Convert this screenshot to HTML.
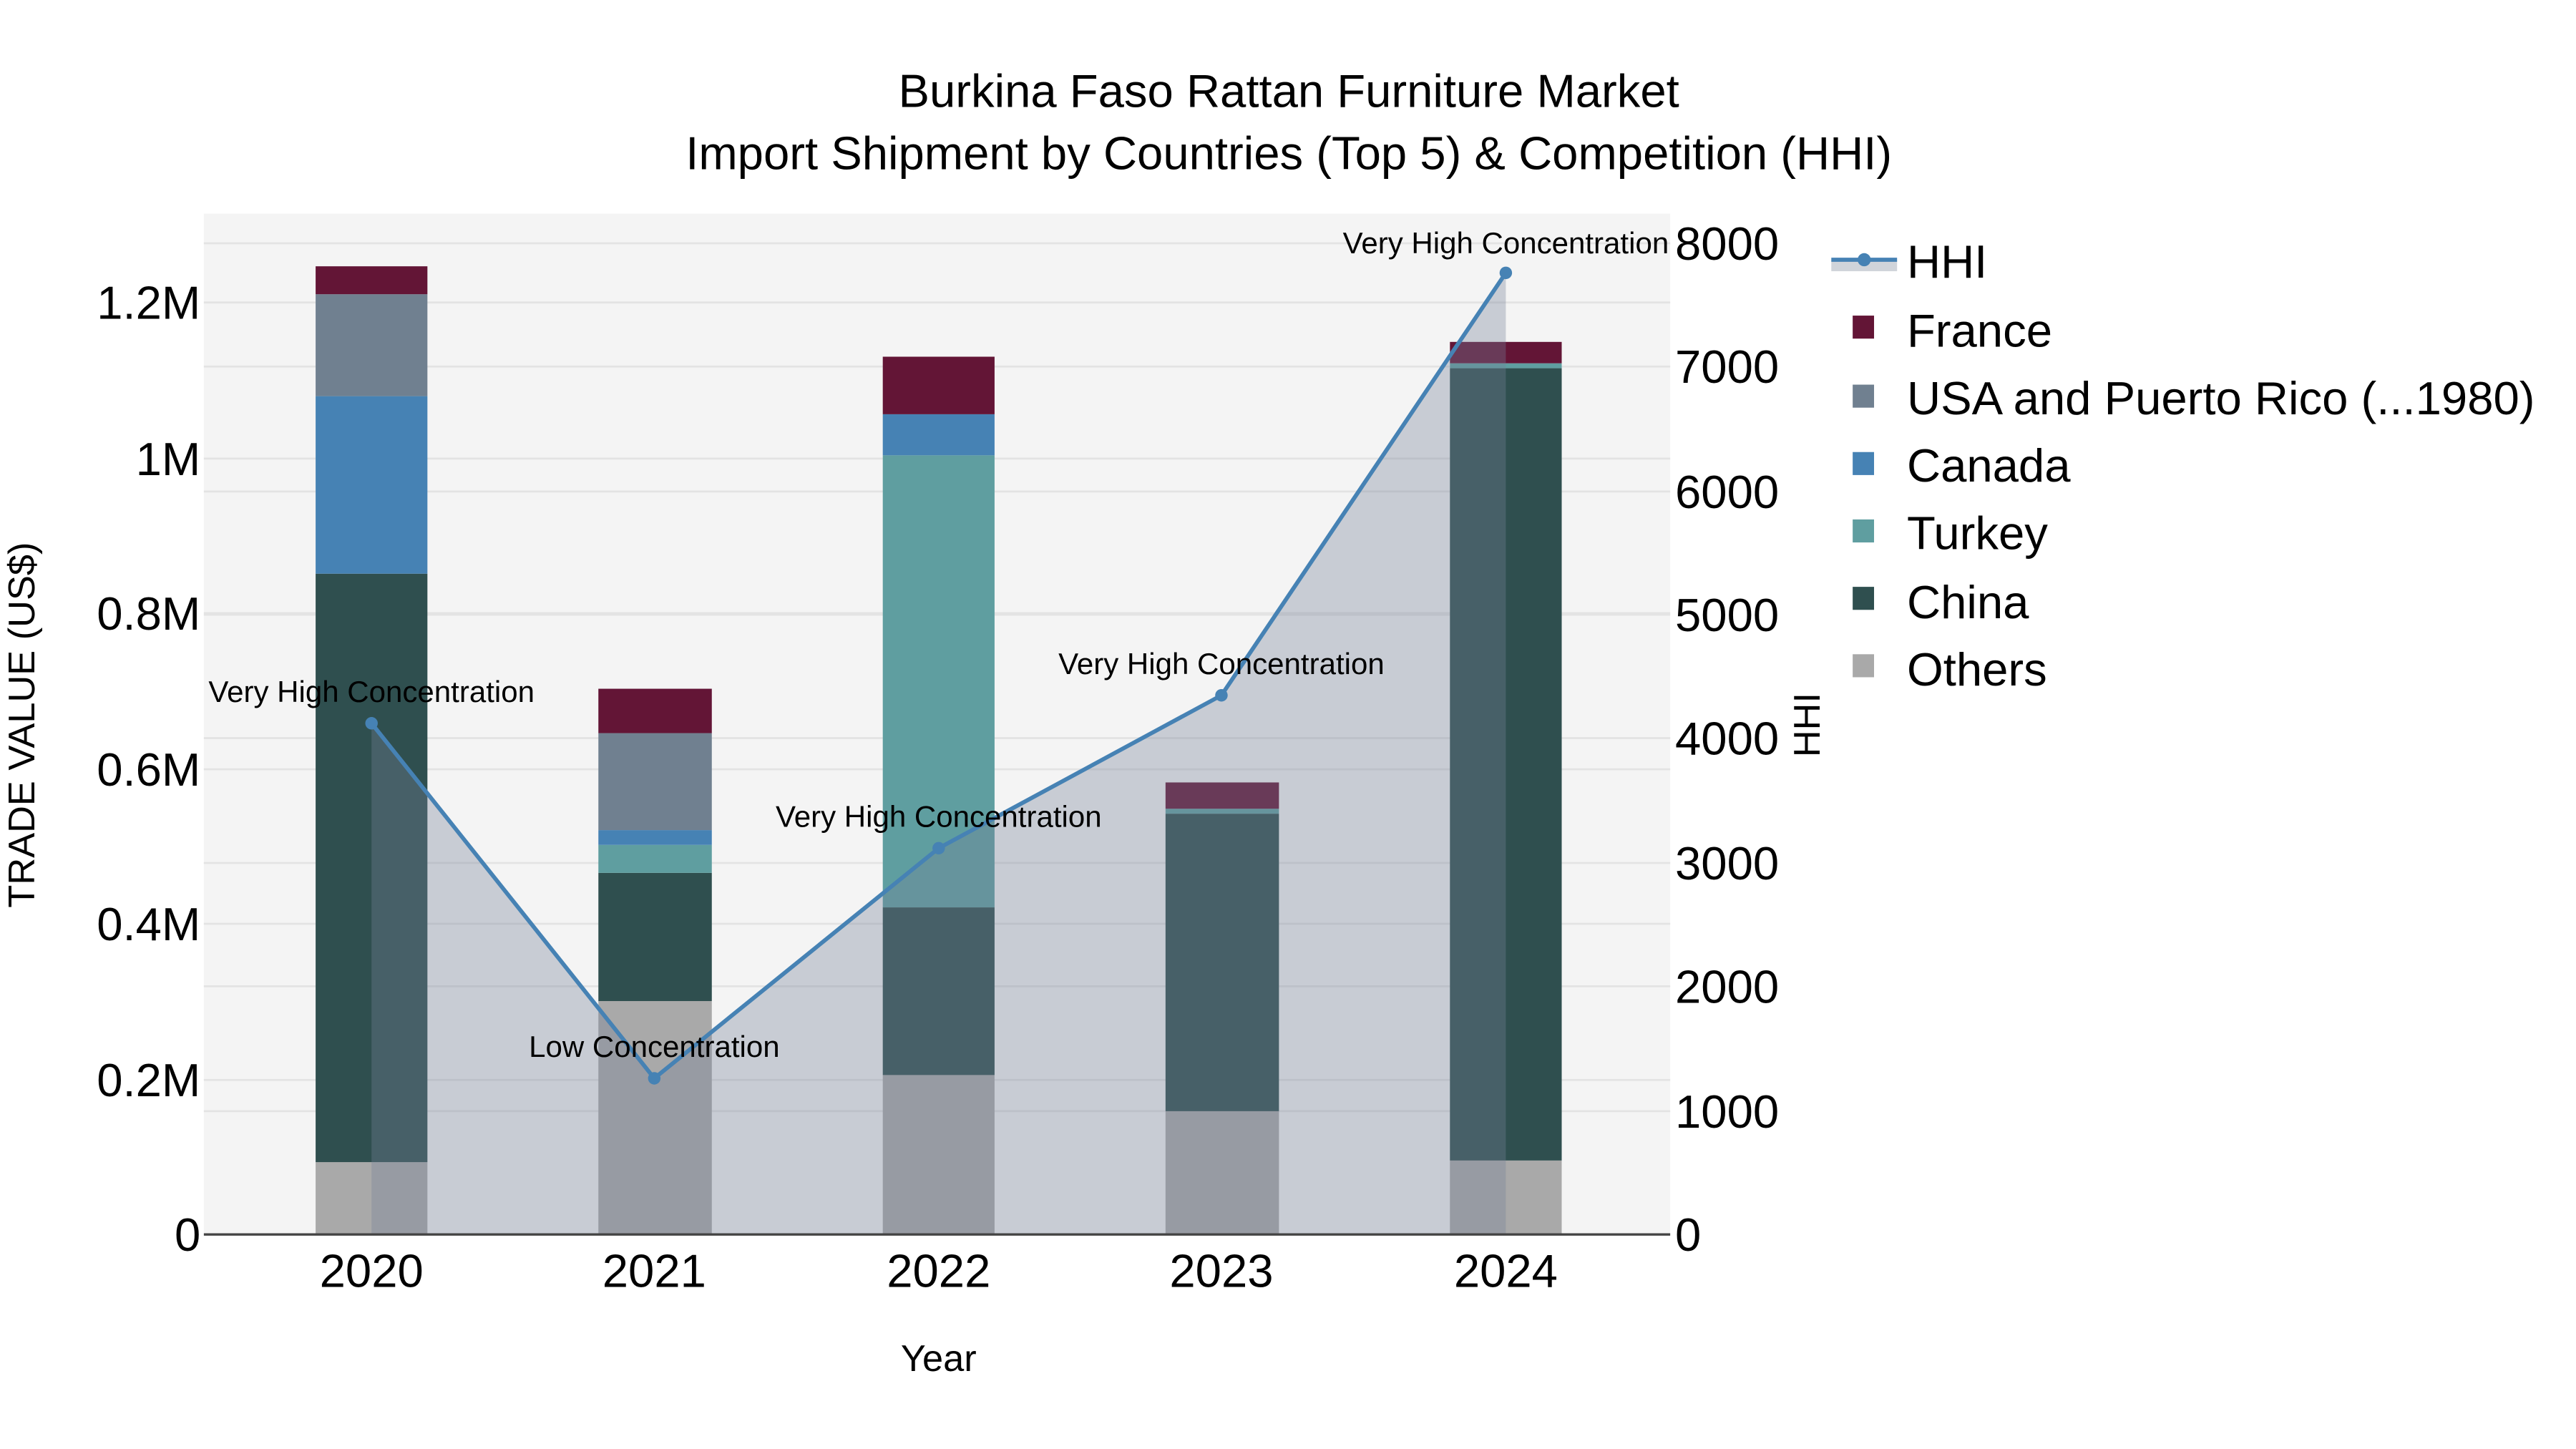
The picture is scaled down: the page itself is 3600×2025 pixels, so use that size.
<!DOCTYPE html>
<html><head><meta charset="utf-8"><style>html,body{margin:0;padding:0;background:#fff}svg{display:block}</style></head>
<body>
<svg width="3600" height="2025" viewBox="0 0 1567 881.5" preserveAspectRatio="none" xmlns="http://www.w3.org/2000/svg" font-family="Liberation Sans, sans-serif">
<rect x="0" y="0" width="1567" height="881.5" fill="#fff"/>
<rect x="124" y="130" width="892" height="621" fill="#f4f4f4"/>
<g stroke="#e3e3e3" stroke-width="1.2">
<line x1="124" x2="1016" y1="657" y2="657"/><line x1="124" x2="1016" y1="562" y2="562"/><line x1="124" x2="1016" y1="468" y2="468"/><line x1="124" x2="1016" y1="373" y2="373"/><line x1="124" x2="1016" y1="279" y2="279"/><line x1="124" x2="1016" y1="184" y2="184"/>
<line x1="124" x2="1016" y1="676" y2="676"/><line x1="124" x2="1016" y1="600" y2="600"/><line x1="124" x2="1016" y1="525" y2="525"/><line x1="124" x2="1016" y1="449" y2="449"/><line x1="124" x2="1016" y1="374" y2="374"/><line x1="124" x2="1016" y1="299" y2="299"/><line x1="124" x2="1016" y1="223" y2="223"/><line x1="124" x2="1016" y1="148" y2="148"/>
</g>
<g>
<rect x="192" y="707" width="68" height="44" fill="#a9a9a9"/>
<rect x="192" y="349" width="68" height="358" fill="#2f4f4f"/>
<rect x="192" y="241" width="68" height="108" fill="#4682b4"/>
<rect x="192" y="179" width="68" height="62" fill="#708090"/>
<rect x="192" y="162" width="68" height="17" fill="#631536"/>
</g>
<g>
<rect x="364" y="609" width="69" height="142" fill="#a9a9a9"/>
<rect x="364" y="531" width="69" height="78" fill="#2f4f4f"/>
<rect x="364" y="514" width="69" height="17" fill="#5f9ea0"/>
<rect x="364" y="505" width="69" height="9" fill="#4682b4"/>
<rect x="364" y="446" width="69" height="59" fill="#708090"/>
<rect x="364" y="419" width="69" height="27" fill="#631536"/>
</g>
<g>
<rect x="537" y="654" width="68" height="97" fill="#a9a9a9"/>
<rect x="537" y="552" width="68" height="102" fill="#2f4f4f"/>
<rect x="537" y="277" width="68" height="275" fill="#5f9ea0"/>
<rect x="537" y="252" width="68" height="25" fill="#4682b4"/>
<rect x="537" y="217" width="68" height="35" fill="#631536"/>
</g>
<g>
<rect x="709" y="676" width="69" height="75" fill="#a9a9a9"/>
<rect x="709" y="495" width="69" height="181" fill="#2f4f4f"/>
<rect x="709" y="492" width="69" height="3" fill="#5f9ea0"/>
<rect x="709" y="476" width="69" height="16" fill="#631536"/>
</g>
<g>
<rect x="882" y="706" width="68" height="45" fill="#a9a9a9"/>
<rect x="882" y="224" width="68" height="482" fill="#2f4f4f"/>
<rect x="882" y="221" width="68" height="3" fill="#5f9ea0"/>
<rect x="882" y="208" width="68" height="13" fill="#631536"/>
</g>
<polygon points="226,440 398,656 571,516 743,423 916,166 916,751 226,751" fill="rgb(118,130,152)" fill-opacity="0.35"/>
<polyline points="226,440 398,656 571,516 743,423 916,166" fill="none" stroke="#4682b4" stroke-width="2.5"/>
<g fill="#4682b4"><circle cx="226" cy="440" r="3.8"/><circle cx="398" cy="656" r="3.8"/><circle cx="571" cy="516" r="3.8"/><circle cx="743" cy="423" r="3.8"/><circle cx="916" cy="166" r="3.8"/></g>
<line x1="124" x2="1016" y1="751" y2="751" stroke="#444" stroke-width="1.5"/>
<g font-size="18.3" fill="#000" text-anchor="middle">
<text x="226" y="427">Very High Concentration</text>
<text x="398" y="643">Low Concentration</text>
<text x="571" y="503">Very High Concentration</text>
<text x="743" y="410">Very High Concentration</text>
<text x="916" y="154">Very High Concentration</text>
</g>
<g font-size="28.4" fill="#000" text-anchor="end">
<text x="122" y="761">0</text><text x="122" y="667">0.2M</text><text x="122" y="572">0.4M</text><text x="122" y="478">0.6M</text><text x="122" y="383">0.8M</text><text x="122" y="289">1M</text><text x="122" y="194">1.2M</text>
</g>
<g font-size="28.4" fill="#000">
<text x="1019" y="761">0</text><text x="1019" y="686">1000</text><text x="1019" y="610">2000</text><text x="1019" y="535">3000</text><text x="1019" y="459">4000</text><text x="1019" y="384">5000</text><text x="1019" y="309">6000</text><text x="1019" y="233">7000</text><text x="1019" y="158">8000</text>
</g>
<g font-size="28.4" fill="#000" text-anchor="middle">
<text x="226" y="783">2020</text><text x="398" y="783">2021</text><text x="571" y="783">2022</text><text x="743" y="783">2023</text><text x="916" y="783">2024</text>
</g>
<text x="571" y="834" font-size="22.8" text-anchor="middle">Year</text>
<text transform="translate(21,441) rotate(-90)" font-size="22.8" text-anchor="middle">TRADE VALUE (US$)</text>
<text transform="translate(1107,441) rotate(-90)" font-size="22.8" text-anchor="middle">HHI</text>
<g font-size="28.4" fill="#000" text-anchor="middle">
<text x="784" y="65">Burkina Faso Rattan Furniture Market</text>
<text x="784" y="103">Import Shipment by Countries (Top 5) &amp; Competition (HHI)</text>
</g>
<rect x="1114" y="158" width="40" height="7" fill="#d0d4da"/>
<line x1="1114" x2="1154" y1="158" y2="158" stroke="#4682b4" stroke-width="2.5"/>
<circle cx="1134" cy="158" r="4" fill="#4682b4"/>
<g>
<rect x="1127" y="192" width="13" height="14" fill="#631536"/>
<rect x="1127" y="234" width="13" height="14" fill="#708090"/>
<rect x="1127" y="275" width="13" height="14" fill="#4682b4"/>
<rect x="1127" y="316" width="13" height="14" fill="#5f9ea0"/>
<rect x="1127" y="357" width="13" height="14" fill="#2f4f4f"/>
<rect x="1127" y="398" width="13" height="14" fill="#a9a9a9"/>
</g>
<g font-size="28.4" fill="#000">
<text x="1160" y="169">HHI</text>
<text x="1160" y="211">France</text>
<text x="1160" y="252">USA and Puerto Rico (...1980)</text>
<text x="1160" y="293">Canada</text>
<text x="1160" y="334">Turkey</text>
<text x="1160" y="376">China</text>
<text x="1160" y="417">Others</text>
</g>
</svg>
</body></html>
